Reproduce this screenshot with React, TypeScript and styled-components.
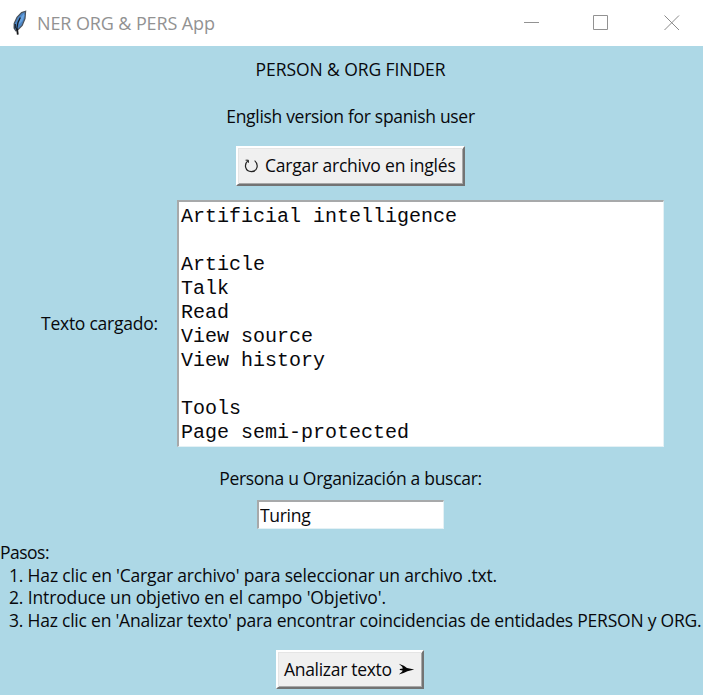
import React from 'react';
import styled, { createGlobalStyle } from 'styled-components';

const GlobalStyle = createGlobalStyle`
  * { box-sizing: border-box; }
  body { margin: 0; background: #add8e6; overflow: hidden; }
`;

const Window = styled.div`
  display: flex;
  flex-direction: column;
  width: 703px;
  height: 695px;
  background: #add8e6;
  color: #08080c;
  font-family: 'Open Sans', 'DejaVu Sans', sans-serif;
  font-size: 17.5px;
  line-height: 23px;
  white-space: pre;
`;

const TitleBar = styled.header`
  display: flex;
  align-items: center;
  flex: none;
  height: 46px;
  padding-left: 12px;
  background: #fff;
`;

const Title = styled.h1`
  flex: 1;
  margin: 0 0 0 9px;
  color: #929292;
  font-size: 18px;
  font-weight: 400;
  letter-spacing: -0.11px;
`;

const Controls = styled.div`
  display: flex;
  gap: 53px;
  padding-right: 23px;
  svg { display: block; }
`;

const Content = styled.main`
  display: flex;
  flex-direction: column;
  align-items: center;
  padding: 12px 2px 0 0;
`;

const Label = styled.div<{ $spacing?: number }>`
  letter-spacing: ${p => p.$spacing ?? 0}px;
`;

const Subtitle = styled(Label)`
  margin: 24px 0 18px;
`;

const Button = styled.button<{ $width: number; $height: number; $spacing: number }>`
  display: flex;
  align-items: center;
  justify-content: flex-start;
  gap: 6px;
  width: ${p => p.$width}px;
  height: ${p => p.$height}px;
  padding: 0 0 0 6px;
  border: 2px solid;
  border-color: #fff #737373 #737373 #fff;
  box-shadow: inset 1px 1px #e5e5e5, inset -1px -1px #a8a8a8;
  background: #f0f0f0;
  color: inherit;
  font: inherit;
  letter-spacing: ${p => p.$spacing}px;
  white-space: pre;
`;

const LoadButton = styled(Button)`
  padding-bottom: 1px;
`;

const AnalyzeButton = styled(Button)`
  margin-right: 1px;
  padding-top: 1px;
`;

const LoadedRow = styled.section`
  display: flex;
  align-items: center;
  align-self: stretch;
  margin-top: 14px;
  padding-left: 41px;
`;

const LoadedLabel = styled(Label)`
  flex: none;
  width: 136px;
`;

const TextBox = styled.div`
  flex: none;
  width: 487px;
  height: 247px;
  padding: 3px 2px 0 2px;
  border: 2px solid;
  border-color: #a7a9aa #e4f1f5 #e4f1f5 #a7a9aa;
  border-right-width: 1px;
  border-bottom-width: 1px;
  background: #fff;
  font: 20px/24px 'Courier New', 'Liberation Mono', monospace;
`;

const SearchLabel = styled(Label)`
  margin-top: 20px;
`;

const Entry = styled.input`
  width: 187px;
  height: 29px;
  margin: 10px 0 12px;
  padding: 0 1px;
  border: 2px solid;
  border-color: #a7a9aa #e4f1f5 #e4f1f5 #a7a9aa;
  border-right-width: 1px;
  border-bottom-width: 1px;
  border-radius: 0;
  outline: none;
  background: #fff;
  color: inherit;
  font: inherit;
  letter-spacing: -0.3px;
`;

const Steps = styled.div`
  align-self: stretch;
  margin-bottom: 18px;
  line-height: 22.7px;
`;

const Step = styled(Label)`
  padding-left: 9px;
`;

const FeatherIcon = () => (
  <svg width="16" height="26" viewBox="0 0 16 26">
    <path d="M13.6 1.2 9.6 2.6 5 7.4 2.2 13.5l-.1 4.6 1.7 2.7 1.4-.3 5-5.2 2.8-6.8z" fill="#4c86c6" stroke="#4a525c" strokeWidth="1.2" />
    <path d="M11.8 3.4 8 8.5 6 15.4l4.4-4.6 2-5z" fill="#6aa5e2" />
    <path d="M8.4 7.5 6 12.4l-1.4 7.3M3.2 14v4.6" fill="none" stroke="#151b25" strokeWidth="1.3" />
    <path d="M5 18.5 5.8 24.6" stroke="#16171a" strokeWidth="1.8" />
  </svg>
);

const ReloadIcon = () => (
  <svg width="15" height="16" viewBox="0 0 15 16">
    <path d="M4 2.6C-.2 6.2.9 13.6 7.4 13.6s7.4-7.4 3.2-11" fill="none" stroke="#222" strokeWidth="1.2" />
    <path d="M1.6 2.2H4.4v2.6" fill="none" stroke="#222" strokeWidth="1" />
  </svg>
);

const ArrowIcon = () => (
  <svg width="17" height="13" viewBox="0 0 17 13">
    <path d="M.8.8 5.8 2.8 9 4.9 16.2 6.6 9.4 8.2 5.6 9.9.8 11.6 4.2 8.6 4.6 7.6 1.8 7.1V6.1L4.8 5.6 4.2 3.8z" fill="#050505" />
  </svg>
);

const LINES = [
  'Artificial intelligence', '', 'Article', 'Talk', 'Read',
  'View source', 'View history', '', 'Tools', 'Page semi-protected',
];

export default function App() {
  return (
    <Window>
      <GlobalStyle />
      <TitleBar>
        <FeatherIcon />
        <Title>NER ORG &amp; PERS App</Title>
        <Controls>
          <svg width="16" height="16"><path d="M0 7.5h15" stroke="#929292" /></svg>
          <svg width="18" height="16"><path d="M.5.5h14v14H.5z" fill="none" stroke="#929292" /></svg>
          <svg width="16" height="16"><path d="M.5.5l14.5 14.5M15 .5.5 15" stroke="#8a8a8a" /></svg>
        </Controls>
      </TitleBar>
      <Content>
        <Label $spacing={-0.08}>PERSON &amp; ORG FINDER</Label>
        <Subtitle $spacing={-0.31}>English version for spanish user</Subtitle>
        <LoadButton $width={229} $height={40} $spacing={-0.2}>
          <ReloadIcon />
          <span>Cargar archivo en inglés</span>
        </LoadButton>
        <LoadedRow>
          <LoadedLabel $spacing={-0.25}>Texto cargado:</LoadedLabel>
          <TextBox>{LINES.join('\n')}</TextBox>
        </LoadedRow>
        <SearchLabel $spacing={-0.3}>Persona u Organización a buscar:</SearchLabel>
        <Entry defaultValue="Turing" />
        <Steps>
          <Label $spacing={-0.5}>Pasos:</Label>
          <Step $spacing={-0.18}>1. Haz clic en 'Cargar archivo' para seleccionar un archivo .txt.</Step>
          <Step $spacing={-0.14}>2. Introduce un objetivo en el campo 'Objetivo'.</Step>
          <Step $spacing={-0.22}>3. Haz clic en 'Analizar texto' para encontrar coincidencias de entidades PERSON y ORG.</Step>
        </Steps>
        <AnalyzeButton $width={148} $height={39} $spacing={-0.3}>
          <span>Analizar texto</span>
          <ArrowIcon />
        </AnalyzeButton>
      </Content>
    </Window>
  );
}
